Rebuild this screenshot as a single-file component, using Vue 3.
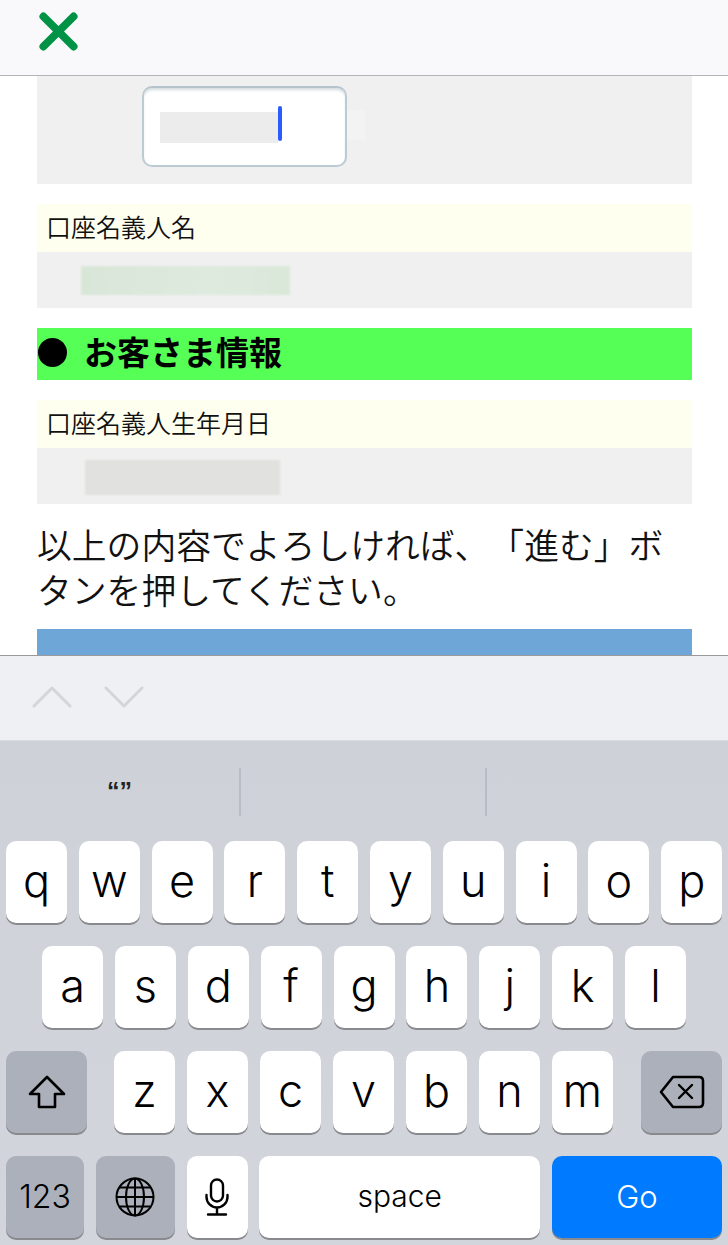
<script setup>
const row1 = ['q','w','e','r','t','y','u','i','o','p']
const row2 = ['a','s','d','f','g','h','j','k','l']
const row3 = ['z','x','c','v','b','n','m']
</script>

<template>
  <div class="screen">
    <header class="topbar">
      <svg class="close" viewBox="0 0 40 40" width="39" height="39">
        <path d="M4.5 4.5 L35.5 35.5 M35.5 4.5 L4.5 35.5" fill="none" stroke="#009245" stroke-width="8" stroke-linecap="round" />
      </svg>
    </header>

    <main class="content">
      <section class="first-block">
        <div class="input">
          <span class="input-redact"></span>
          <span class="caret"></span>
        </div>
        <span class="ghost"></span>
      </section>

      <div class="label">口座名義人名</div>
      <div class="value"><span class="redact name-redact"></span></div>

      <h2 class="heading"><span class="dot"></span>お客さま情報</h2>

      <div class="label">口座名義人生年月日</div>
      <div class="value"><span class="redact date-redact"></span></div>

      <p class="message">以上の内容でよろしければ、「進む」ボタンを押してください。</p>

      <div class="submit"></div>
    </main>

    <div class="toolbar">
      <svg width="40" height="22" viewBox="0 0 40 22"><path d="M2 20 L20 2 L38 20" fill="none" stroke="#d4d5d9" stroke-width="3" stroke-linecap="round" stroke-linejoin="round" /></svg>
      <svg width="40" height="22" viewBox="0 0 40 22"><path d="M2 2 L20 20 L38 2" fill="none" stroke="#d4d5d9" stroke-width="3" stroke-linecap="round" stroke-linejoin="round" /></svg>
    </div>

    <div class="keyboard">
      <div class="suggestions">
        <div class="sug sug-quote"><span class="quotes">“”</span></div>
        <div class="sug sug-mid"></div>
        <div class="sug sug-last"></div>
      </div>

      <div class="rows">
        <div class="row row-a">
          <div v-for="k in row1" :key="k" class="key">{{ k }}</div>
        </div>
        <div class="row row-b">
          <div v-for="k in row2" :key="k" class="key">{{ k }}</div>
        </div>
        <div class="row row-c">
          <div class="key dark wide shift">
            <svg width="38" height="34" viewBox="0 0 38 34">
              <path d="M19 2 L36 19 H27 V32 H11 V19 H2 Z" fill="none" stroke="#000" stroke-width="2.6" stroke-linejoin="round" />
            </svg>
          </div>
          <div v-for="k in row3" :key="k" class="key">{{ k }}</div>
          <div class="key dark wide del">
            <svg width="46" height="34" viewBox="0 0 46 34">
              <path d="M14 2 H40 Q44 2 44 6 V28 Q44 32 40 32 H14 L2 17 Z" fill="none" stroke="#000" stroke-width="2.6" stroke-linejoin="round" />
              <path d="M20 10 L33 23 M33 10 L20 23" fill="none" stroke="#000" stroke-width="2.4" stroke-linecap="round" />
            </svg>
          </div>
        </div>
        <div class="row row-d">
          <div class="key dark num">123</div>
          <div class="key dark globe">
            <svg width="40" height="40" viewBox="0 0 40 40" fill="none" stroke="#000" stroke-width="2">
              <circle cx="20" cy="20" r="18.5" />
              <ellipse cx="20" cy="20" rx="9" ry="18.5" />
              <path d="M20 1.5 V38.5 M1.5 20 H38.5 M4.5 10.5 H35.5 M4.5 29.5 H35.5" />
            </svg>
          </div>
          <div class="key mic">
            <svg width="24" height="38" viewBox="0 0 24 38" fill="none" stroke="#000" stroke-width="2.4" stroke-linecap="round">
              <rect x="6" y="1.5" width="12" height="22" rx="6" />
              <path d="M1.5 17 V19 A10.5 10.5 0 0 0 22.5 19 V17 M12 29.5 V36 M3 36.5 H21" />
            </svg>
          </div>
          <div class="key space">space</div>
          <div class="key go">Go</div>
        </div>
      </div>
    </div>
  </div>
</template>

<style>
html, body { margin: 0; background: #fff; }
</style>

<style scoped>
.screen {
  width: 728px;
  height: 1245px;
  display: flex;
  flex-direction: column;
  overflow: hidden;
  font-family: Inter, "Liberation Sans", "Noto Sans CJK JP", sans-serif;
  color: #000;
}
.topbar {
  height: 76px;
  box-sizing: border-box;
  flex: none;
  background: #f9f9fb;
  border-bottom: 1px solid #b4b4b4;
  padding: 12px 0 0 39px;
}
.close { display: block; }
.content {
  height: 579px;
  flex: none;
  box-sizing: border-box;
  padding: 0 36px 0 37px;
  overflow: hidden;
  background: #fff;
  font-family: "Noto Sans CJK JP", "Liberation Sans", sans-serif;
  text-spacing-trim: space-all;
}
.first-block {
  height: 108px;
  background: #f0f0f0;
  display: flex;
  align-items: flex-start;
  padding: 10px 0 0 105px;
  box-sizing: border-box;
  margin-bottom: 20px;
}
.input {
  width: 205px;
  height: 81px;
  box-sizing: border-box;
  border: 2px solid #bccbd3;
  border-top-color: #b5c4cc;
  border-radius: 10px;
  background: #fff;
  box-shadow: inset 0 3px 3px -1px #d5dcdf;
  display: flex;
  align-items: center;
  padding-left: 16px;
}
.redact { display: block; filter: blur(1px); }
.input-redact { display: block; width: 118px; height: 31px; background: #ececec; margin-top: 2px; }
.caret {
  width: 3.5px;
  height: 35px;
  border-radius: 2px;
  background: #2a5cff;
  margin-top: -6px;
}
.ghost { width: 18px; height: 30px; background: #f3f3f3; margin-top: 24px; }
.label {
  height: 48px;
  line-height: 44px;
  background: #ffffef;
  padding-left: 9px;
  font-size: 25px;
  font-weight: 350;
  color: #111;
}
.value {
  height: 56px;
  background: #f0f0f0;
  display: flex;
  align-items: center;
}
.name-redact {
  width: 209px;
  height: 29px;
  margin-left: 44px;
  background: linear-gradient(100deg, #d8e6d8, #dfeadf 60%, #d9e8d9);
}
.date-redact {
  width: 195px;
  height: 35px;
  margin: 2px 0 0 48px;
  background: #e1e2df;
}
.heading {
  height: 52px;
  margin: 20px 0;
  box-sizing: border-box;
  padding-bottom: 6px;
  background: #55ff55;
  display: flex;
  align-items: center;
  font-size: 33px;
  font-weight: 700;
  line-height: 46px;
}
.dot {
  width: 29px;
  height: 29px;
  border-radius: 50%;
  background: #000;
  margin: 3px 17px 0 1px;
}
.message {
  margin: 18px 0 17px;
  font-size: 34.8px;
  font-weight: 350;
  line-height: 45px;
  color: #111;
}
.submit {
  height: 40px;
  background: #6fa6d8;
}
.toolbar {
  height: 86px;
  flex: none;
  box-sizing: border-box;
  background: #eff0f4;
  border-top: 1px solid #9a9a9a;
  border-bottom: 1px solid #d9dbe0;
  display: flex;
  gap: 32px;
  padding: 30px 0 0 32px;
  align-items: flex-start;
}
.keyboard {
  flex: 1;
  background: linear-gradient(#ced1d8, #d2d5dc);
  display: flex;
  flex-direction: column;
}
.suggestions {
  height: 100px;
  display: flex;
  flex: none;
}
.sug { margin-top: 27px; height: 48px; box-sizing: border-box; }
.sug-quote {
  width: 239px;
  display: flex;
  justify-content: center;
}
.quotes {
  font-family: "Liberation Sans", sans-serif;
  font-weight: 700;
  font-size: 25px;
  line-height: 30px;
  color: #222;
  margin-top: 8px;
}
.sug-mid {
  width: 246px;
  border-left: 2px solid #b9bcc4;
}
.sug-last {
  flex: 1;
  border-left: 2px solid #b9bcc4;
}
.rows {
  display: flex;
  flex-direction: column;
  gap: 23px;
}
.row {
  display: flex;
  height: 82px;
}
.row-a { padding: 0 6px; gap: 11.8px; }
.row-b { padding: 0 42px; gap: 11.875px; }
.row-c { padding: 0 6px; gap: 12px; }
.row-d { padding: 0 6px; gap: 11.75px; }
.key {
  width: 61px;
  height: 82px;
  flex: none;
  border-radius: 10px;
  background: #fff;
  box-shadow: 0 2px 0 #898a8e;
  display: flex;
  align-items: center;
  justify-content: center;
  font-size: 45px;
  font-weight: 300;
  line-height: 1;
  padding-bottom: 4px;
  box-sizing: border-box;
}
.dark { background: #abb0ba; }
.wide { width: 81px; padding-bottom: 0; }
.shift { margin-right: 15px; }
.del { margin-left: 16px; }
.num { width: 78px; font-size: 32px; padding-bottom: 0; }
.globe { width: 79px; padding-bottom: 0; }
.mic { padding-bottom: 0; }
.space { width: 281px; font-size: 30px; padding-bottom: 2px; }
.go { width: 170px; background: #007aff; color: #fff; font-size: 31px; padding-bottom: 2px; }
</style>
